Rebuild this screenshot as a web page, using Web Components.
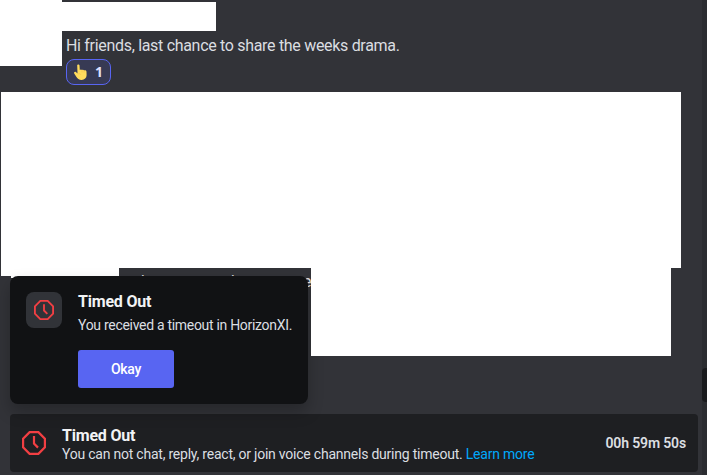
<!DOCTYPE html>
<html lang="en">
<head>
<meta charset="utf-8">
<title>Timed Out</title>
<style>
  body {
    margin: 0;
    background: #323338;
  }
</style>
</head>
<body>
<chat-window>
  <chat-message>
    Hi friends, last chance to share the weeks drama.
    <reaction-pill slot="reactions" count="1"></reaction-pill>
  </chat-message>
  <covered-line slot="covered"></covered-line>
  <blank-block slot="overlay" style="--x: 0px; --y: 0px; --w: 62px; --h: 66px"></blank-block>
  <blank-block slot="overlay" style="--x: 62px; --y: 2px; --w: 154px; --h: 29px"></blank-block>
  <blank-block slot="overlay" style="--x: 1px; --y: 92px; --w: 680px; --h: 176px"></blank-block>
  <blank-block slot="overlay" style="--x: 1px; --y: 268px; --w: 118px; --h: 8px"></blank-block>
  <blank-block slot="overlay" style="--x: 11px; --y: 276px; --w: 8px; --h: 2px"></blank-block>
  <timeout-popout slot="overlay">
    <span slot="title">Timed Out</span>
    You received a timeout in HorizonXI.
    <span slot="action">Okay</span>
  </timeout-popout>
  <blank-block slot="overlay" style="--x: 311px; --y: 268px; --w: 360px; --h: 88px"></blank-block>
  <timeout-bar slot="footer">
    <span slot="title">Timed Out</span>
    You can not chat, reply, react, or join voice channels during timeout. <a>Learn more</a>
    <span slot="timer">00h 59m 50s</span>
  </timeout-bar>
</chat-window>

<script>
class ChatWindow extends HTMLElement {
  connectedCallback() {
    this.attachShadow({ mode: 'open' });
    this.shadowRoot.innerHTML = `
      <style>
        :host {
          display: flex;
          position: relative;
          width: 707px;
          height: 475px;
          overflow: hidden;
          background: #323338;
          color: #dbdee1;
          font-family: Roboto, "Noto Sans", sans-serif;
        }
        .main {
          flex: 1;
          display: flex;
          flex-direction: column;
          box-sizing: border-box;
          padding: 35px 4px 3px 10px;
        }
        .footer {
          margin-top: auto;
        }
        .track {
          width: 5px;
          box-sizing: border-box;
          padding-top: 368px;
          background: #2b2d31;
        }
        .thumb {
          height: 34px;
          border-radius: 4px 0 0 4px;
          background: #1a1b1e;
        }
      </style>
      <div class="main">
        <slot></slot>
        <slot name="covered"></slot>
        <div class="footer"><slot name="footer"></slot></div>
      </div>
      <div class="track"><div class="thumb"></div></div>
      <slot name="overlay"></slot>
    `;
  }
}

class ChatMessage extends HTMLElement {
  connectedCallback() {
    this.attachShadow({ mode: 'open' });
    this.shadowRoot.innerHTML = `
      <style>
        :host {
          display: block;
          padding-left: 56px;
        }
        .text {
          height: 24px;
          font-size: 16px;
          line-height: 22px;
          letter-spacing: -0.31px;
          white-space: nowrap;
        }
      </style>
      <div class="text"><slot></slot></div>
      <slot name="reactions"></slot>
    `;
  }
}

class ReactionPill extends HTMLElement {
  connectedCallback() {
    this.attachShadow({ mode: 'open' });
    this.shadowRoot.innerHTML = `
      <style>
        :host {
          display: flex;
          align-items: center;
          justify-content: space-between;
          box-sizing: border-box;
          width: 45px;
          height: 26px;
          padding: 0 7px 0 6px;
          border: 1px solid #5865f2;
          border-radius: 8px;
          background: #373a54;
          color: #dee0fc;
          font-family: "Noto Sans", sans-serif;
          font-size: 14px;
          font-weight: 700;
          line-height: 24px;
        }
        svg {
          display: block;
        }
      </style>
      <svg width="16" height="16" viewBox="0 0 16 16">
        <path fill="#ffdc5d" d="M4.2 1.2C4.2 .1 6.4 .1 6.5 1.2L6.8 6C7.4 5.3 8.6 5.3 9 6.1C9.7 5.5 10.8 5.7 11.1 6.5C12 6.1 13.4 6.5 13.5 7.7L13.6 11.3C13.5 14 11.6 16 8.6 16C6 16 4.4 14.4 3.3 12.7L1.2 9.4C.6 8.3 2 7.3 2.9 8.1L4.5 9.4Z"/>
        <path fill="none" stroke="#efae42" stroke-width=".4" d="M9 6.1V8.4M11.1 6.5V8.6M5 10.2C6 9.3 7.2 9.7 7.8 10.7"/>
      </svg>
      <span>${this.getAttribute('count')}</span>
    `;
  }
}

// Message line that mostly sits behind the popout
class CoveredLine extends HTMLElement {
  connectedCallback() {
    this.attachShadow({ mode: 'open' });
    this.shadowRoot.innerHTML = `
      <style>
        :host {
          display: flex;
          margin-top: 186px;
          padding-left: 131px;
          font-size: 16px;
          line-height: 22px;
        }
        span { width: 90px; }
        span + span { width: 72px; }
      </style>
      <span>h</span><span>h</span><span>e</span>
    `;
  }
}

class BlankBlock extends HTMLElement {
  connectedCallback() {
    this.attachShadow({ mode: 'open' });
    this.shadowRoot.innerHTML = `
      <style>
        :host {
          position: absolute;
          left: var(--x);
          top: var(--y);
          width: var(--w);
          height: var(--h);
          background: #fff;
        }
      </style>
    `;
  }
}

class TimeoutIcon extends HTMLElement {
  connectedCallback() {
    this.attachShadow({ mode: 'open' });
    this.shadowRoot.innerHTML = `
      <style>
        :host {
          display: block;
          flex: none;
          width: var(--icon-size, 24px);
          height: var(--icon-size, 24px);
        }
        svg { display: block; }
      </style>
      <svg width="100%" height="100%" viewBox="0 0 24 24" fill="none" stroke="#f23f43" stroke-width="2.2">
        <path d="M7.6 1.1H16.4L22.9 7.6V16.4L16.4 22.9H7.6L1.1 16.4V7.6Z"/>
        <path d="M12 5V12.6L16 16.6"/>
      </svg>
    `;
  }
}

class TimeoutPopout extends HTMLElement {
  connectedCallback() {
    this.attachShadow({ mode: 'open' });
    this.shadowRoot.innerHTML = `
      <style>
        :host {
          position: absolute;
          left: 10px;
          top: 276px;
          display: flex;
          gap: 16px;
          box-sizing: border-box;
          width: 298px;
          height: 128px;
          padding: 16px;
          border-radius: 8px;
          background: #111214;
          box-shadow: 0 8px 16px rgba(0, 0, 0, 0.24);
        }
        .badge {
          display: flex;
          flex: none;
          align-items: center;
          justify-content: center;
          width: 36px;
          height: 36px;
          border-radius: 8px;
          background: #313338;
          --icon-size: 20px;
        }
        .title {
          color: #f2f3f5;
          font-size: 16px;
          font-weight: 700;
          line-height: 20px;
          letter-spacing: -0.2px;
        }
        .text {
          margin-top: 4px;
          font-size: 14px;
          line-height: 18px;
          letter-spacing: -0.3px;
          white-space: nowrap;
        }
        button {
          display: block;
          width: 96px;
          height: 38px;
          margin-top: 16px;
          padding: 0;
          border: 0;
          border-radius: 3px;
          background: #5865f2;
          color: #fff;
          font: 500 14px/38px Roboto, "Noto Sans", sans-serif;
          letter-spacing: -0.3px;
        }
      </style>
      <div class="badge"><timeout-icon></timeout-icon></div>
      <div>
        <div class="title"><slot name="title"></slot></div>
        <div class="text"><slot></slot></div>
        <button><slot name="action"></slot></button>
      </div>
    `;
  }
}

class TimeoutBar extends HTMLElement {
  connectedCallback() {
    this.attachShadow({ mode: 'open' });
    this.shadowRoot.innerHTML = `
      <style>
        :host {
          display: flex;
          align-items: center;
          box-sizing: border-box;
          width: 688px;
          height: 58px;
          padding: 0 12px;
          border-radius: 4px;
          background: #1e1f22;
        }
        .body {
          flex: 1;
          padding: 3px 0 0 16px;
        }
        .title {
          color: #f2f3f5;
          font-size: 16px;
          font-weight: 700;
          line-height: 18px;
          letter-spacing: -0.2px;
        }
        .text {
          font-size: 14px;
          line-height: 18px;
          letter-spacing: -0.225px;
          white-space: nowrap;
        }
        ::slotted(a) {
          color: #00a8fc;
        }
        .timer {
          font-size: 14px;
          font-weight: 600;
          line-height: 18px;
          letter-spacing: -0.15px;
          white-space: nowrap;
        }
      </style>
      <timeout-icon></timeout-icon>
      <div class="body">
        <div class="title"><slot name="title"></slot></div>
        <div class="text"><slot></slot></div>
      </div>
      <div class="timer"><slot name="timer"></slot></div>
    `;
  }
}

customElements.define('timeout-icon', TimeoutIcon);
customElements.define('reaction-pill', ReactionPill);
customElements.define('chat-message', ChatMessage);
customElements.define('covered-line', CoveredLine);
customElements.define('blank-block', BlankBlock);
customElements.define('timeout-popout', TimeoutPopout);
customElements.define('timeout-bar', TimeoutBar);
customElements.define('chat-window', ChatWindow);
</script>
</body>
</html>
